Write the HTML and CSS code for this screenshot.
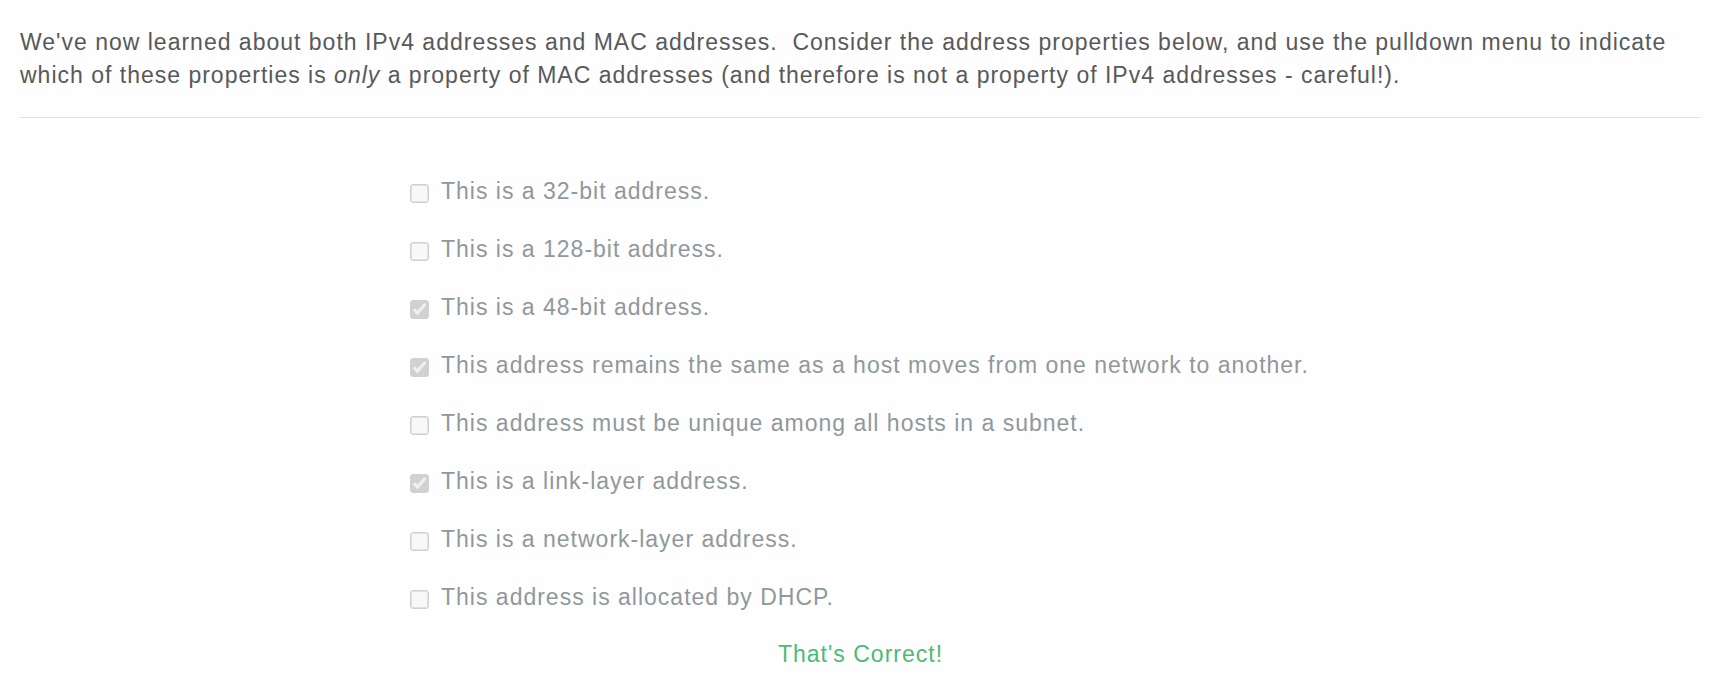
FILE: index.html
```html
<!DOCTYPE html>
<html lang="en">
<head>
<meta charset="utf-8">
<meta name="viewport" content="width=device-width, initial-scale=1">
<title>IPv4 and MAC address properties</title>
<link rel="stylesheet" href="styles.css">
</head>
<body>
<main class="question">
  <p class="prompt">We've now learned about both IPv4 addresses and MAC addresses.&nbsp; Consider the address properties below, and use the pulldown menu to indicate which of these properties is <em>only</em> a property of MAC addresses (and therefore is not a property of IPv4 addresses - careful!).</p>
  <hr class="divider">
  <form class="answers">
    <label class="choice"><input class="box" type="checkbox" disabled><span>This is a 32-bit address.</span></label>
    <label class="choice"><input class="box" type="checkbox" disabled><span>This is a 128-bit address.</span></label>
    <label class="choice"><input class="box" type="checkbox" checked disabled><span>This is a 48-bit address.</span></label>
    <label class="choice"><input class="box" type="checkbox" checked disabled><span>This address remains the same as a host moves from one network to another.</span></label>
    <label class="choice"><input class="box" type="checkbox" disabled><span>This address must be unique among all hosts in a subnet.</span></label>
    <label class="choice"><input class="box" type="checkbox" checked disabled><span>This is a link-layer address.</span></label>
    <label class="choice"><input class="box" type="checkbox" disabled><span>This is a network-layer address.</span></label>
    <label class="choice"><input class="box" type="checkbox" disabled><span>This address is allocated by DHCP.</span></label>
  </form>
  <p class="result" role="status">That's Correct!</p>
</main>
</body>
</html>
```
FILE: styles.css
```css
* {
  box-sizing: border-box;
}

body {
  margin: 0;
  background: #fefefe;
  color: #58595b;
  font: 23px/33px "Liberation Sans", Arial, sans-serif;
  letter-spacing: 1px;
}

.question {
  padding: 26px 8px 0 20px;
}

.prompt {
  margin: 0;
}

.divider {
  margin: 25px 0 57px;
  border: 0;
  border-top: 1px solid #e3e3e3;
}

.answers {
  display: flex;
  flex-direction: column;
  align-items: flex-start;
  gap: 25px;
  max-width: 901px;
  margin: 0 auto;
}

.choice {
  display: flex;
  align-items: flex-start;
  gap: 12px;
  color: #90989d;
}

.box {
  appearance: none;
  flex: none;
  width: 19px;
  height: 19px;
  margin: 9px 0 0;
  border: 1px solid #d1d1d1;
  border-radius: 3px;
  background: #f8f8f8;
  box-shadow: inset 0 0 0 1px #e2e2e2;
}

.box:checked {
  background: #d1d1d1;
  box-shadow: none;
}

.box:checked::before {
  content: "";
  display: block;
  width: 17px;
  height: 17px;
  background: #f0f0f0;
  clip-path: polygon(10% 55%, 22% 42%, 37% 58%, 78% 12%, 91% 24%, 38% 86%);
}

.result {
  margin: 24px 0 0;
  color: #4dba76;
  text-align: center;
}
```
